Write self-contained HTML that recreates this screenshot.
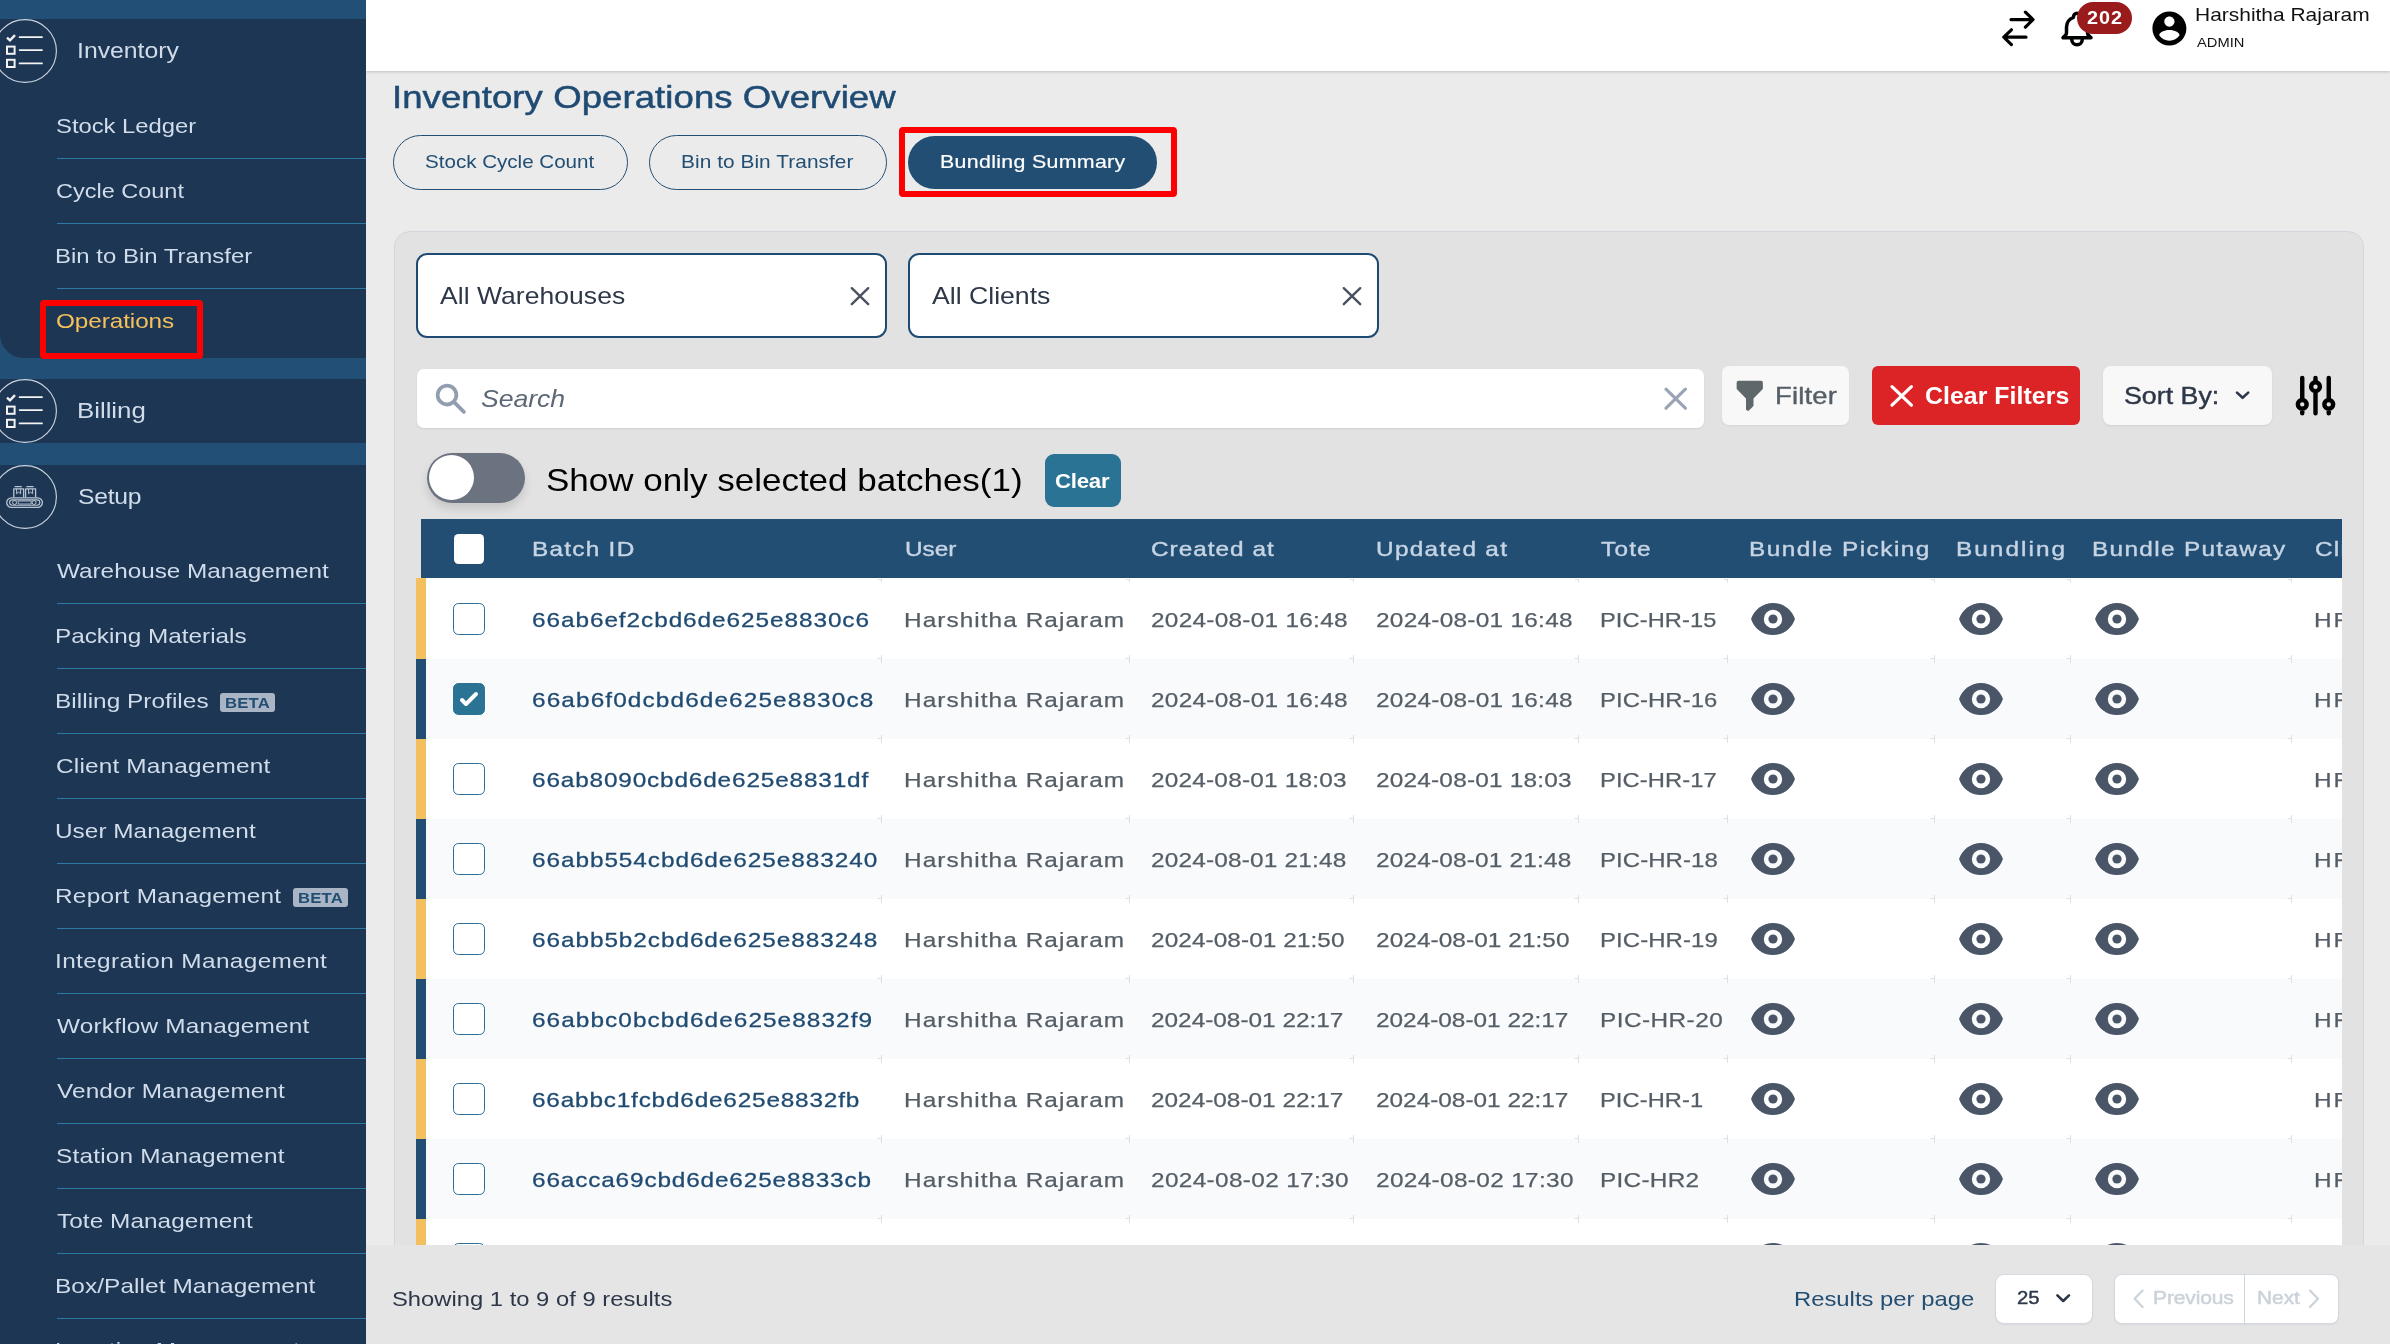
<!DOCTYPE html>
<html lang="en"><head><meta charset="utf-8"><title>Inventory Operations Overview</title>
<style>
html,body{margin:0;padding:0}
body{width:2390px;height:1344px;overflow:hidden;position:relative;background:#ebebeb;font-family:'Liberation Sans',sans-serif}
.abs{position:absolute}
.t{position:absolute;white-space:pre;font-family:'Liberation Sans',sans-serif;transform-origin:0 50%}
#sidebar{position:absolute;left:0;top:0;width:366px;height:1344px;background:#224f75;overflow:hidden}
#sidebar .panel{position:absolute;left:0;width:366px;background:#1d3653}
#sidebar .ln{position:absolute;left:57px;width:309px;height:1px;background:#2b79a1}
#topbar{position:absolute;left:366px;top:0;width:2024px;height:71px;background:#fff;box-shadow:0 1px 3px rgba(0,0,0,.18)}
#main{position:absolute;left:0;top:0;width:2390px;height:1344px}
.cb{position:absolute;width:30px;height:30px;border:1.4px solid #2b6f94;border-radius:5.5px;background:#fff;left:453px}
#root{position:absolute;left:0;top:0;width:2390px;height:1344px;overflow:hidden;will-change:transform}
</style></head><body><div id="root">

<main id="main">
<span class="t" style="left:391.60px;top:82.00px;font-size:31.5px;line-height:31.5px;color:#1f4b73;letter-spacing:0.062px;transform:scaleX(1.1600);-webkit-text-stroke:0.5px #1f4b73;">Inventory Operations Overview</span>
<div class="abs" style="left:393px;top:135px;width:233.4px;height:53px;border:1.3px solid #224e73;border-radius:28px"></div>
<span class="t" style="left:425.20px;top:153.00px;font-size:18.4px;line-height:18.4px;color:#224e73;letter-spacing:-0.022px;transform:scaleX(1.1213);">Stock Cycle Count</span>
<div class="abs" style="left:649px;top:135px;width:236.2px;height:53px;border:1.3px solid #224e73;border-radius:28px"></div>
<span class="t" style="left:681.00px;top:153.00px;font-size:18.4px;line-height:18.4px;color:#224e73;letter-spacing:0.049px;transform:scaleX(1.1333);">Bin to Bin Transfer</span>
<div class="abs" style="left:908px;top:136px;width:249px;height:53px;background:#224e73;border-radius:27px"></div>
<span class="t" style="left:940.00px;top:153.00px;font-size:18.4px;line-height:18.4px;color:#fff;letter-spacing:0.287px;transform:scaleX(1.1600);-webkit-text-stroke:0.2px #fff;">Bundling Summary</span>
<div class="abs" style="left:899px;top:127.4px;width:266.2px;height:57.8px;border:6px solid #fd0000;border-radius:4px"></div>
<div class="abs" style="left:394px;top:231px;width:1967.6px;height:1100px;background:#e2e2e2;border:1px solid #d1d6dd;border-radius:16px"></div>
<div class="abs" style="left:416px;top:253px;width:467px;height:81.4px;background:#fff;border:2px solid #1f4b73;border-radius:11px"></div>
<span class="t" style="left:439.80px;top:285.00px;font-size:23.6px;line-height:23.6px;color:#2d3748;letter-spacing:0.041px;transform:scaleX(1.1232);">All Warehouses</span>
<svg class="abs" style="left:847px;top:283px" width="26" height="26" viewBox="0 0 26 26" stroke="#4a5160" stroke-width="2.4" stroke-linecap="round"><path d="M4.8 5.2L21.2 21.2M21.2 5.2L4.8 21.2"/></svg>
<div class="abs" style="left:908px;top:253px;width:467px;height:81.4px;background:#fff;border:2px solid #1f4b73;border-radius:11px"></div>
<span class="t" style="left:932.00px;top:285.00px;font-size:23.6px;line-height:23.6px;color:#2d3748;letter-spacing:-0.018px;transform:scaleX(1.1308);">All Clients</span>
<svg class="abs" style="left:1339px;top:283px" width="26" height="26" viewBox="0 0 26 26" stroke="#4a5160" stroke-width="2.4" stroke-linecap="round"><path d="M4.8 5.2L21.2 21.2M21.2 5.2L4.8 21.2"/></svg>
<div class="abs" style="left:417px;top:368.6px;width:1287px;height:59.6px;background:#fff;border-radius:7px;box-shadow:0 1px 2px rgba(0,0,0,.08)"></div>
<svg class="abs" style="left:431.85px;top:379.85px" width="37.5" height="37.5" viewBox="0 0 20 20" fill="#929db0"><path fill-rule="evenodd" d="M8 4a4 4 0 100 8 4 4 0 000-8zM2 8a6 6 0 1110.89 3.476l4.817 4.817a1 1 0 01-1.414 1.414l-4.816-4.816A6 6 0 012 8z" clip-rule="evenodd"/></svg>
<span class="t" style="left:480.50px;top:388.00px;font-size:23.6px;line-height:23.6px;color:#5d6776;font-style:italic;letter-spacing:-0.088px;transform:scaleX(1.1301);">Search</span>
<svg class="abs" style="left:1660px;top:383px" width="32" height="32" viewBox="0 0 32 32" stroke="#9aa4b5" stroke-width="3.2" stroke-linecap="round"><path d="M6 6.2L25.4 25.2M25.4 6.2L6 25.2"/></svg>
<div class="abs" style="left:1722px;top:366px;width:127px;height:59px;background:#f8f8f8;border-radius:7px;box-shadow:0 1px 2px rgba(0,0,0,.06)"></div>
<svg class="abs" style="left:1731.4px;top:377.2px" width="37.5" height="37.5" viewBox="0 0 20 20" fill="#5f676b"><path fill-rule="evenodd" d="M3 3a1 1 0 011-1h12a1 1 0 011 1v3a1 1 0 01-.293.707L12 11.414V15a1 1 0 01-.293.707l-2 2A1 1 0 018 17v-5.586L3.293 6.707A1 1 0 013 6V3z" clip-rule="evenodd"/></svg>
<span class="t" style="left:1775.00px;top:385.00px;font-size:23.6px;line-height:23.6px;color:#555e66;letter-spacing:0.172px;transform:scaleX(1.1600);-webkit-text-stroke:0.4px #555e66;">Filter</span>
<div class="abs" style="left:1872px;top:366px;width:208px;height:59px;background:#dc2326;border-radius:6px"></div>
<svg class="abs" style="left:1886px;top:380px" width="32" height="32" viewBox="0 0 32 32" stroke="#fff" stroke-width="3.2" stroke-linecap="round"><path d="M6 6.6L25.4 25.2M25.4 6.6L6 25.2"/></svg>
<span class="t" style="left:1925.40px;top:385.00px;font-size:23.6px;line-height:23.6px;color:#fff;font-weight:700;letter-spacing:0.047px;transform:scaleX(1.0533);">Clear Filters</span>
<div class="abs" style="left:2102.7px;top:365.8px;width:169.5px;height:59.2px;background:#f8f8f8;border-radius:8px;box-shadow:0 1px 2px rgba(0,0,0,.08)"></div>
<span class="t" style="left:2124.40px;top:385.00px;font-size:23.6px;line-height:23.6px;color:#2d3748;transform:scaleX(1.1358);-webkit-text-stroke:0.4px #2d3748;">Sort By:</span>
<svg class="abs" style="left:2232px;top:387px" width="22" height="16" viewBox="0 0 22 16" fill="none" stroke="#2d3748" stroke-width="2.6" stroke-linecap="round" stroke-linejoin="round"><path d="M5 5.6L10.6 10.8L16.2 5.6"/></svg>
<svg class="abs" style="left:2289px;top:369px" width="53" height="53" viewBox="0 0 24 24" fill="none" stroke="#000" stroke-width="2" stroke-linecap="round" stroke-linejoin="round"><path d="M12 6V4m0 2a2 2 0 100 4m0-4a2 2 0 110 4m-6 8a2 2 0 100-4m0 4a2 2 0 110-4m0 4v2m0-6V4m6 6v10m6-2a2 2 0 100-4m0 4a2 2 0 110-4m0 4v2m0-6V4"/></svg>
<div class="abs" style="left:427px;top:453px;width:98px;height:50px;background:#6b7280;border-radius:25px;box-shadow:0 6px 10px rgba(0,0,0,.12)"></div>
<div class="abs" style="left:428.8px;top:455px;width:45.4px;height:45.4px;background:#fff;border-radius:50%"></div>
<span class="t" style="left:546.00px;top:465.00px;font-size:31.9px;line-height:31.9px;color:#000;transform:scaleX(1.0974);">Show only selected batches(1)</span>
<div class="abs" style="left:1045px;top:454px;width:76px;height:53px;background:#2b7394;border-radius:9px"></div>
<span class="t" style="left:1055.00px;top:470.00px;font-size:21px;line-height:21px;color:#fff;font-weight:700;letter-spacing:-0.236px;transform:scaleX(1.0588);">Clear</span>
<div class="abs" style="left:416px;top:519px;width:1926px;height:726px;overflow:hidden">
<div class="abs" style="left:5px;top:0;width:1921px;height:59.4px;background:#224e73"></div>
<div class="abs" style="left:38px;top:14.6px;width:30.4px;height:30.4px;background:#fff;border-radius:4.5px"></div>
<div class="abs" style="left:0;top:59px;width:1926px;height:81px;background:#fff;border-left:10px solid #f4c05f;box-sizing:border-box"></div>
<div class="abs" style="left:0;top:140px;width:1926px;height:80px;background:#f9fafb;border-left:10px solid #224e73;box-sizing:border-box"></div>
<div class="abs" style="left:0;top:220px;width:1926px;height:80px;background:#fff;border-left:10px solid #f4c05f;box-sizing:border-box"></div>
<div class="abs" style="left:0;top:300px;width:1926px;height:80px;background:#f9fafb;border-left:10px solid #224e73;box-sizing:border-box"></div>
<div class="abs" style="left:0;top:380px;width:1926px;height:80px;background:#fff;border-left:10px solid #f4c05f;box-sizing:border-box"></div>
<div class="abs" style="left:0;top:460px;width:1926px;height:80px;background:#f9fafb;border-left:10px solid #224e73;box-sizing:border-box"></div>
<div class="abs" style="left:0;top:540px;width:1926px;height:80px;background:#fff;border-left:10px solid #f4c05f;box-sizing:border-box"></div>
<div class="abs" style="left:0;top:620px;width:1926px;height:80px;background:#f9fafb;border-left:10px solid #224e73;box-sizing:border-box"></div>
<div class="abs" style="left:0;top:700px;width:1926px;height:80px;background:#fff;border-left:10px solid #f4c05f;box-sizing:border-box"></div>
</div>
<span class="t" style="left:531.80px;top:538.00px;font-size:21px;line-height:21px;color:#c6d4e4;letter-spacing:1.084px;transform:scaleX(1.1600);-webkit-text-stroke:0.4px #c6d4e4;">Batch ID</span>
<span class="t" style="left:904.80px;top:538.00px;font-size:21px;line-height:21px;color:#c6d4e4;transform:scaleX(1.1600);-webkit-text-stroke:0.4px #c6d4e4;">User</span>
<span class="t" style="left:1150.60px;top:538.00px;font-size:21px;line-height:21px;color:#c6d4e4;letter-spacing:0.862px;transform:scaleX(1.1600);-webkit-text-stroke:0.4px #c6d4e4;">Created at</span>
<span class="t" style="left:1375.80px;top:538.00px;font-size:21px;line-height:21px;color:#c6d4e4;letter-spacing:1.130px;transform:scaleX(1.1600);-webkit-text-stroke:0.4px #c6d4e4;">Updated at</span>
<span class="t" style="left:1601.00px;top:538.00px;font-size:21px;line-height:21px;color:#c6d4e4;letter-spacing:1.034px;transform:scaleX(1.1600);-webkit-text-stroke:0.4px #c6d4e4;">Tote</span>
<span class="t" style="left:1749.40px;top:538.00px;font-size:21px;line-height:21px;color:#c6d4e4;letter-spacing:1.273px;transform:scaleX(1.1600);-webkit-text-stroke:0.4px #c6d4e4;">Bundle Picking</span>
<span class="t" style="left:1956.40px;top:538.00px;font-size:21px;line-height:21px;color:#c6d4e4;letter-spacing:1.749px;transform:scaleX(1.1600);-webkit-text-stroke:0.4px #c6d4e4;">Bundling</span>
<span class="t" style="left:2092.40px;top:538.00px;font-size:21px;line-height:21px;color:#c6d4e4;letter-spacing:1.141px;transform:scaleX(1.1600);-webkit-text-stroke:0.4px #c6d4e4;">Bundle Putaway</span>
<div class="abs" style="left:416px;top:578px;width:1926px;height:667px;overflow:hidden"><div class="abs" style="left:-416px;top:-578px;width:2390px;height:1344px">
<div class="cb" style="top:603px"></div>
<span class="t" style="left:532.20px;top:609.00px;font-size:21px;line-height:21px;color:#1f4b73;letter-spacing:0.802px;transform:scaleX(1.1600);-webkit-text-stroke:0.3px #1f4b73;">66ab6ef2cbd6de625e8830c6</span>
<span class="t" style="left:904.00px;top:609.00px;font-size:21px;line-height:21px;color:#555e66;letter-spacing:0.916px;transform:scaleX(1.1600);-webkit-text-stroke:0.25px #555e66;">Harshitha Rajaram</span>
<span class="t" style="left:1150.60px;top:609.00px;font-size:21px;line-height:21px;color:#555e66;letter-spacing:0.241px;transform:scaleX(1.1600);-webkit-text-stroke:0.25px #555e66;">2024-08-01 16:48</span>
<span class="t" style="left:1375.60px;top:609.00px;font-size:21px;line-height:21px;color:#555e66;letter-spacing:0.241px;transform:scaleX(1.1600);-webkit-text-stroke:0.25px #555e66;">2024-08-01 16:48</span>
<span class="t" style="left:1599.80px;top:609.00px;font-size:21px;line-height:21px;color:#555e66;letter-spacing:0.089px;transform:scaleX(1.1248);-webkit-text-stroke:0.25px #555e66;">PIC-HR-15</span>
<span class="t" style="left:2313.60px;top:609.00px;font-size:21px;line-height:21px;color:#555e66;letter-spacing:1.552px;transform:scaleX(1.1600);-webkit-text-stroke:0.25px #555e66;">HR</span>
<svg class="abs" style="left:1749.95px;top:596.20px" width="46" height="46" viewBox="0 0 20 20" fill="#4a5568"><path d="M10 12a2 2 0 100-4 2 2 0 000 4z"/><path fill-rule="evenodd" d="M.458 10C1.732 5.943 5.522 3 10 3s8.268 2.943 9.542 7c-1.274 4.057-5.064 7-9.542 7S1.732 14.057.458 10zM14 10a4 4 0 11-8 0 4 4 0 018 0z" clip-rule="evenodd"/></svg>
<svg class="abs" style="left:1957.95px;top:596.20px" width="46" height="46" viewBox="0 0 20 20" fill="#4a5568"><path d="M10 12a2 2 0 100-4 2 2 0 000 4z"/><path fill-rule="evenodd" d="M.458 10C1.732 5.943 5.522 3 10 3s8.268 2.943 9.542 7c-1.274 4.057-5.064 7-9.542 7S1.732 14.057.458 10zM14 10a4 4 0 11-8 0 4 4 0 018 0z" clip-rule="evenodd"/></svg>
<svg class="abs" style="left:2093.95px;top:596.20px" width="46" height="46" viewBox="0 0 20 20" fill="#4a5568"><path d="M10 12a2 2 0 100-4 2 2 0 000 4z"/><path fill-rule="evenodd" d="M.458 10C1.732 5.943 5.522 3 10 3s8.268 2.943 9.542 7c-1.274 4.057-5.064 7-9.542 7S1.732 14.057.458 10zM14 10a4 4 0 11-8 0 4 4 0 018 0z" clip-rule="evenodd"/></svg>
<div class="cb" style="top:683px;background:#2b7394;border-color:#2b7394"></div>
<svg class="abs" style="left:453px;top:683px" width="32" height="32" viewBox="0 0 16 16" fill="#fff"><path d="M12.207 4.793a1 1 0 010 1.414l-5 5a1 1 0 01-1.414 0l-2-2a1 1 0 011.414-1.414L6.500 9.086l4.293-4.293a1 1 0 011.414 0z"/></svg>
<span class="t" style="left:532.20px;top:689.00px;font-size:21px;line-height:21px;color:#1f4b73;letter-spacing:0.960px;transform:scaleX(1.1600);-webkit-text-stroke:0.3px #1f4b73;">66ab6f0dcbd6de625e8830c8</span>
<span class="t" style="left:904.00px;top:689.00px;font-size:21px;line-height:21px;color:#555e66;letter-spacing:0.916px;transform:scaleX(1.1600);-webkit-text-stroke:0.25px #555e66;">Harshitha Rajaram</span>
<span class="t" style="left:1150.60px;top:689.00px;font-size:21px;line-height:21px;color:#555e66;letter-spacing:0.241px;transform:scaleX(1.1600);-webkit-text-stroke:0.25px #555e66;">2024-08-01 16:48</span>
<span class="t" style="left:1375.60px;top:689.00px;font-size:21px;line-height:21px;color:#555e66;letter-spacing:0.241px;transform:scaleX(1.1600);-webkit-text-stroke:0.25px #555e66;">2024-08-01 16:48</span>
<span class="t" style="left:1599.80px;top:689.00px;font-size:21px;line-height:21px;color:#555e66;letter-spacing:0.088px;transform:scaleX(1.1347);-webkit-text-stroke:0.25px #555e66;">PIC-HR-16</span>
<span class="t" style="left:2313.60px;top:689.00px;font-size:21px;line-height:21px;color:#555e66;letter-spacing:1.552px;transform:scaleX(1.1600);-webkit-text-stroke:0.25px #555e66;">HR</span>
<svg class="abs" style="left:1749.95px;top:676.20px" width="46" height="46" viewBox="0 0 20 20" fill="#4a5568"><path d="M10 12a2 2 0 100-4 2 2 0 000 4z"/><path fill-rule="evenodd" d="M.458 10C1.732 5.943 5.522 3 10 3s8.268 2.943 9.542 7c-1.274 4.057-5.064 7-9.542 7S1.732 14.057.458 10zM14 10a4 4 0 11-8 0 4 4 0 018 0z" clip-rule="evenodd"/></svg>
<svg class="abs" style="left:1957.95px;top:676.20px" width="46" height="46" viewBox="0 0 20 20" fill="#4a5568"><path d="M10 12a2 2 0 100-4 2 2 0 000 4z"/><path fill-rule="evenodd" d="M.458 10C1.732 5.943 5.522 3 10 3s8.268 2.943 9.542 7c-1.274 4.057-5.064 7-9.542 7S1.732 14.057.458 10zM14 10a4 4 0 11-8 0 4 4 0 018 0z" clip-rule="evenodd"/></svg>
<svg class="abs" style="left:2093.95px;top:676.20px" width="46" height="46" viewBox="0 0 20 20" fill="#4a5568"><path d="M10 12a2 2 0 100-4 2 2 0 000 4z"/><path fill-rule="evenodd" d="M.458 10C1.732 5.943 5.522 3 10 3s8.268 2.943 9.542 7c-1.274 4.057-5.064 7-9.542 7S1.732 14.057.458 10zM14 10a4 4 0 11-8 0 4 4 0 018 0z" clip-rule="evenodd"/></svg>
<div class="cb" style="top:763px"></div>
<span class="t" style="left:532.20px;top:769.00px;font-size:21px;line-height:21px;color:#1f4b73;letter-spacing:0.720px;transform:scaleX(1.1600);-webkit-text-stroke:0.3px #1f4b73;">66ab8090cbd6de625e8831df</span>
<span class="t" style="left:904.00px;top:769.00px;font-size:21px;line-height:21px;color:#555e66;letter-spacing:0.916px;transform:scaleX(1.1600);-webkit-text-stroke:0.25px #555e66;">Harshitha Rajaram</span>
<span class="t" style="left:1150.60px;top:769.00px;font-size:21px;line-height:21px;color:#555e66;letter-spacing:0.184px;transform:scaleX(1.1600);-webkit-text-stroke:0.25px #555e66;">2024-08-01 18:03</span>
<span class="t" style="left:1375.60px;top:769.00px;font-size:21px;line-height:21px;color:#555e66;letter-spacing:0.184px;transform:scaleX(1.1600);-webkit-text-stroke:0.25px #555e66;">2024-08-01 18:03</span>
<span class="t" style="left:1599.80px;top:769.00px;font-size:21px;line-height:21px;color:#555e66;letter-spacing:0.066px;transform:scaleX(1.1307);-webkit-text-stroke:0.25px #555e66;">PIC-HR-17</span>
<span class="t" style="left:2313.60px;top:769.00px;font-size:21px;line-height:21px;color:#555e66;letter-spacing:1.552px;transform:scaleX(1.1600);-webkit-text-stroke:0.25px #555e66;">HR</span>
<svg class="abs" style="left:1749.95px;top:756.20px" width="46" height="46" viewBox="0 0 20 20" fill="#4a5568"><path d="M10 12a2 2 0 100-4 2 2 0 000 4z"/><path fill-rule="evenodd" d="M.458 10C1.732 5.943 5.522 3 10 3s8.268 2.943 9.542 7c-1.274 4.057-5.064 7-9.542 7S1.732 14.057.458 10zM14 10a4 4 0 11-8 0 4 4 0 018 0z" clip-rule="evenodd"/></svg>
<svg class="abs" style="left:1957.95px;top:756.20px" width="46" height="46" viewBox="0 0 20 20" fill="#4a5568"><path d="M10 12a2 2 0 100-4 2 2 0 000 4z"/><path fill-rule="evenodd" d="M.458 10C1.732 5.943 5.522 3 10 3s8.268 2.943 9.542 7c-1.274 4.057-5.064 7-9.542 7S1.732 14.057.458 10zM14 10a4 4 0 11-8 0 4 4 0 018 0z" clip-rule="evenodd"/></svg>
<svg class="abs" style="left:2093.95px;top:756.20px" width="46" height="46" viewBox="0 0 20 20" fill="#4a5568"><path d="M10 12a2 2 0 100-4 2 2 0 000 4z"/><path fill-rule="evenodd" d="M.458 10C1.732 5.943 5.522 3 10 3s8.268 2.943 9.542 7c-1.274 4.057-5.064 7-9.542 7S1.732 14.057.458 10zM14 10a4 4 0 11-8 0 4 4 0 018 0z" clip-rule="evenodd"/></svg>
<div class="cb" style="top:843px"></div>
<span class="t" style="left:532.20px;top:849.00px;font-size:21px;line-height:21px;color:#1f4b73;letter-spacing:0.802px;transform:scaleX(1.1600);-webkit-text-stroke:0.3px #1f4b73;">66abb554cbd6de625e883240</span>
<span class="t" style="left:904.00px;top:849.00px;font-size:21px;line-height:21px;color:#555e66;letter-spacing:0.916px;transform:scaleX(1.1600);-webkit-text-stroke:0.25px #555e66;">Harshitha Rajaram</span>
<span class="t" style="left:1150.60px;top:849.00px;font-size:21px;line-height:21px;color:#555e66;letter-spacing:0.172px;transform:scaleX(1.1600);-webkit-text-stroke:0.25px #555e66;">2024-08-01 21:48</span>
<span class="t" style="left:1375.60px;top:849.00px;font-size:21px;line-height:21px;color:#555e66;letter-spacing:0.172px;transform:scaleX(1.1600);-webkit-text-stroke:0.25px #555e66;">2024-08-01 21:48</span>
<span class="t" style="left:1599.80px;top:849.00px;font-size:21px;line-height:21px;color:#555e66;letter-spacing:0.066px;transform:scaleX(1.1406);-webkit-text-stroke:0.25px #555e66;">PIC-HR-18</span>
<span class="t" style="left:2313.60px;top:849.00px;font-size:21px;line-height:21px;color:#555e66;letter-spacing:1.552px;transform:scaleX(1.1600);-webkit-text-stroke:0.25px #555e66;">HR</span>
<svg class="abs" style="left:1749.95px;top:836.20px" width="46" height="46" viewBox="0 0 20 20" fill="#4a5568"><path d="M10 12a2 2 0 100-4 2 2 0 000 4z"/><path fill-rule="evenodd" d="M.458 10C1.732 5.943 5.522 3 10 3s8.268 2.943 9.542 7c-1.274 4.057-5.064 7-9.542 7S1.732 14.057.458 10zM14 10a4 4 0 11-8 0 4 4 0 018 0z" clip-rule="evenodd"/></svg>
<svg class="abs" style="left:1957.95px;top:836.20px" width="46" height="46" viewBox="0 0 20 20" fill="#4a5568"><path d="M10 12a2 2 0 100-4 2 2 0 000 4z"/><path fill-rule="evenodd" d="M.458 10C1.732 5.943 5.522 3 10 3s8.268 2.943 9.542 7c-1.274 4.057-5.064 7-9.542 7S1.732 14.057.458 10zM14 10a4 4 0 11-8 0 4 4 0 018 0z" clip-rule="evenodd"/></svg>
<svg class="abs" style="left:2093.95px;top:836.20px" width="46" height="46" viewBox="0 0 20 20" fill="#4a5568"><path d="M10 12a2 2 0 100-4 2 2 0 000 4z"/><path fill-rule="evenodd" d="M.458 10C1.732 5.943 5.522 3 10 3s8.268 2.943 9.542 7c-1.274 4.057-5.064 7-9.542 7S1.732 14.057.458 10zM14 10a4 4 0 11-8 0 4 4 0 018 0z" clip-rule="evenodd"/></svg>
<div class="cb" style="top:923px"></div>
<span class="t" style="left:532.20px;top:929.00px;font-size:21px;line-height:21px;color:#1f4b73;letter-spacing:0.802px;transform:scaleX(1.1600);-webkit-text-stroke:0.3px #1f4b73;">66abb5b2cbd6de625e883248</span>
<span class="t" style="left:904.00px;top:929.00px;font-size:21px;line-height:21px;color:#555e66;letter-spacing:0.916px;transform:scaleX(1.1600);-webkit-text-stroke:0.25px #555e66;">Harshitha Rajaram</span>
<span class="t" style="left:1150.60px;top:929.00px;font-size:21px;line-height:21px;color:#555e66;letter-spacing:0.069px;transform:scaleX(1.1600);-webkit-text-stroke:0.25px #555e66;">2024-08-01 21:50</span>
<span class="t" style="left:1375.60px;top:929.00px;font-size:21px;line-height:21px;color:#555e66;letter-spacing:0.069px;transform:scaleX(1.1600);-webkit-text-stroke:0.25px #555e66;">2024-08-01 21:50</span>
<span class="t" style="left:1599.80px;top:929.00px;font-size:21px;line-height:21px;color:#555e66;letter-spacing:0.066px;transform:scaleX(1.1406);-webkit-text-stroke:0.25px #555e66;">PIC-HR-19</span>
<span class="t" style="left:2313.60px;top:929.00px;font-size:21px;line-height:21px;color:#555e66;letter-spacing:1.552px;transform:scaleX(1.1600);-webkit-text-stroke:0.25px #555e66;">HR</span>
<svg class="abs" style="left:1749.95px;top:916.20px" width="46" height="46" viewBox="0 0 20 20" fill="#4a5568"><path d="M10 12a2 2 0 100-4 2 2 0 000 4z"/><path fill-rule="evenodd" d="M.458 10C1.732 5.943 5.522 3 10 3s8.268 2.943 9.542 7c-1.274 4.057-5.064 7-9.542 7S1.732 14.057.458 10zM14 10a4 4 0 11-8 0 4 4 0 018 0z" clip-rule="evenodd"/></svg>
<svg class="abs" style="left:1957.95px;top:916.20px" width="46" height="46" viewBox="0 0 20 20" fill="#4a5568"><path d="M10 12a2 2 0 100-4 2 2 0 000 4z"/><path fill-rule="evenodd" d="M.458 10C1.732 5.943 5.522 3 10 3s8.268 2.943 9.542 7c-1.274 4.057-5.064 7-9.542 7S1.732 14.057.458 10zM14 10a4 4 0 11-8 0 4 4 0 018 0z" clip-rule="evenodd"/></svg>
<svg class="abs" style="left:2093.95px;top:916.20px" width="46" height="46" viewBox="0 0 20 20" fill="#4a5568"><path d="M10 12a2 2 0 100-4 2 2 0 000 4z"/><path fill-rule="evenodd" d="M.458 10C1.732 5.943 5.522 3 10 3s8.268 2.943 9.542 7c-1.274 4.057-5.064 7-9.542 7S1.732 14.057.458 10zM14 10a4 4 0 11-8 0 4 4 0 018 0z" clip-rule="evenodd"/></svg>
<div class="cb" style="top:1003px"></div>
<span class="t" style="left:532.20px;top:1009.00px;font-size:21px;line-height:21px;color:#1f4b73;letter-spacing:0.915px;transform:scaleX(1.1600);-webkit-text-stroke:0.3px #1f4b73;">66abbc0bcbd6de625e8832f9</span>
<span class="t" style="left:904.00px;top:1009.00px;font-size:21px;line-height:21px;color:#555e66;letter-spacing:0.916px;transform:scaleX(1.1600);-webkit-text-stroke:0.25px #555e66;">Harshitha Rajaram</span>
<span class="t" style="left:1150.60px;top:1009.00px;font-size:21px;line-height:21px;color:#555e66;transform:scaleX(1.1600);-webkit-text-stroke:0.25px #555e66;">2024-08-01 22:17</span>
<span class="t" style="left:1375.60px;top:1009.00px;font-size:21px;line-height:21px;color:#555e66;transform:scaleX(1.1600);-webkit-text-stroke:0.25px #555e66;">2024-08-01 22:17</span>
<span class="t" style="left:1599.80px;top:1009.00px;font-size:21px;line-height:21px;color:#555e66;letter-spacing:0.388px;transform:scaleX(1.1600);-webkit-text-stroke:0.25px #555e66;">PIC-HR-20</span>
<span class="t" style="left:2313.60px;top:1009.00px;font-size:21px;line-height:21px;color:#555e66;letter-spacing:1.552px;transform:scaleX(1.1600);-webkit-text-stroke:0.25px #555e66;">HR</span>
<svg class="abs" style="left:1749.95px;top:996.20px" width="46" height="46" viewBox="0 0 20 20" fill="#4a5568"><path d="M10 12a2 2 0 100-4 2 2 0 000 4z"/><path fill-rule="evenodd" d="M.458 10C1.732 5.943 5.522 3 10 3s8.268 2.943 9.542 7c-1.274 4.057-5.064 7-9.542 7S1.732 14.057.458 10zM14 10a4 4 0 11-8 0 4 4 0 018 0z" clip-rule="evenodd"/></svg>
<svg class="abs" style="left:1957.95px;top:996.20px" width="46" height="46" viewBox="0 0 20 20" fill="#4a5568"><path d="M10 12a2 2 0 100-4 2 2 0 000 4z"/><path fill-rule="evenodd" d="M.458 10C1.732 5.943 5.522 3 10 3s8.268 2.943 9.542 7c-1.274 4.057-5.064 7-9.542 7S1.732 14.057.458 10zM14 10a4 4 0 11-8 0 4 4 0 018 0z" clip-rule="evenodd"/></svg>
<svg class="abs" style="left:2093.95px;top:996.20px" width="46" height="46" viewBox="0 0 20 20" fill="#4a5568"><path d="M10 12a2 2 0 100-4 2 2 0 000 4z"/><path fill-rule="evenodd" d="M.458 10C1.732 5.943 5.522 3 10 3s8.268 2.943 9.542 7c-1.274 4.057-5.064 7-9.542 7S1.732 14.057.458 10zM14 10a4 4 0 11-8 0 4 4 0 018 0z" clip-rule="evenodd"/></svg>
<div class="cb" style="top:1083px"></div>
<span class="t" style="left:532.20px;top:1089.00px;font-size:21px;line-height:21px;color:#1f4b73;letter-spacing:0.690px;transform:scaleX(1.1600);-webkit-text-stroke:0.3px #1f4b73;">66abbc1fcbd6de625e8832fb</span>
<span class="t" style="left:904.00px;top:1089.00px;font-size:21px;line-height:21px;color:#555e66;letter-spacing:0.916px;transform:scaleX(1.1600);-webkit-text-stroke:0.25px #555e66;">Harshitha Rajaram</span>
<span class="t" style="left:1150.60px;top:1089.00px;font-size:21px;line-height:21px;color:#555e66;transform:scaleX(1.1600);-webkit-text-stroke:0.25px #555e66;">2024-08-01 22:17</span>
<span class="t" style="left:1375.60px;top:1089.00px;font-size:21px;line-height:21px;color:#555e66;transform:scaleX(1.1600);-webkit-text-stroke:0.25px #555e66;">2024-08-01 22:17</span>
<span class="t" style="left:1599.80px;top:1089.00px;font-size:21px;line-height:21px;color:#555e66;letter-spacing:0.076px;transform:scaleX(1.1258);-webkit-text-stroke:0.25px #555e66;">PIC-HR-1</span>
<span class="t" style="left:2313.60px;top:1089.00px;font-size:21px;line-height:21px;color:#555e66;letter-spacing:1.552px;transform:scaleX(1.1600);-webkit-text-stroke:0.25px #555e66;">HR</span>
<svg class="abs" style="left:1749.95px;top:1076.20px" width="46" height="46" viewBox="0 0 20 20" fill="#4a5568"><path d="M10 12a2 2 0 100-4 2 2 0 000 4z"/><path fill-rule="evenodd" d="M.458 10C1.732 5.943 5.522 3 10 3s8.268 2.943 9.542 7c-1.274 4.057-5.064 7-9.542 7S1.732 14.057.458 10zM14 10a4 4 0 11-8 0 4 4 0 018 0z" clip-rule="evenodd"/></svg>
<svg class="abs" style="left:1957.95px;top:1076.20px" width="46" height="46" viewBox="0 0 20 20" fill="#4a5568"><path d="M10 12a2 2 0 100-4 2 2 0 000 4z"/><path fill-rule="evenodd" d="M.458 10C1.732 5.943 5.522 3 10 3s8.268 2.943 9.542 7c-1.274 4.057-5.064 7-9.542 7S1.732 14.057.458 10zM14 10a4 4 0 11-8 0 4 4 0 018 0z" clip-rule="evenodd"/></svg>
<svg class="abs" style="left:2093.95px;top:1076.20px" width="46" height="46" viewBox="0 0 20 20" fill="#4a5568"><path d="M10 12a2 2 0 100-4 2 2 0 000 4z"/><path fill-rule="evenodd" d="M.458 10C1.732 5.943 5.522 3 10 3s8.268 2.943 9.542 7c-1.274 4.057-5.064 7-9.542 7S1.732 14.057.458 10zM14 10a4 4 0 11-8 0 4 4 0 018 0z" clip-rule="evenodd"/></svg>
<div class="cb" style="top:1163px"></div>
<span class="t" style="left:532.20px;top:1169.00px;font-size:21px;line-height:21px;color:#1f4b73;letter-spacing:0.727px;transform:scaleX(1.1600);-webkit-text-stroke:0.3px #1f4b73;">66acca69cbd6de625e8833cb</span>
<span class="t" style="left:904.00px;top:1169.00px;font-size:21px;line-height:21px;color:#555e66;letter-spacing:0.916px;transform:scaleX(1.1600);-webkit-text-stroke:0.25px #555e66;">Harshitha Rajaram</span>
<span class="t" style="left:1150.60px;top:1169.00px;font-size:21px;line-height:21px;color:#555e66;letter-spacing:0.299px;transform:scaleX(1.1600);-webkit-text-stroke:0.25px #555e66;">2024-08-02 17:30</span>
<span class="t" style="left:1375.60px;top:1169.00px;font-size:21px;line-height:21px;color:#555e66;letter-spacing:0.299px;transform:scaleX(1.1600);-webkit-text-stroke:0.25px #555e66;">2024-08-02 17:30</span>
<span class="t" style="left:1599.80px;top:1169.00px;font-size:21px;line-height:21px;color:#555e66;letter-spacing:0.230px;transform:scaleX(1.1600);-webkit-text-stroke:0.25px #555e66;">PIC-HR2</span>
<span class="t" style="left:2313.60px;top:1169.00px;font-size:21px;line-height:21px;color:#555e66;letter-spacing:1.552px;transform:scaleX(1.1600);-webkit-text-stroke:0.25px #555e66;">HR</span>
<svg class="abs" style="left:1749.95px;top:1156.20px" width="46" height="46" viewBox="0 0 20 20" fill="#4a5568"><path d="M10 12a2 2 0 100-4 2 2 0 000 4z"/><path fill-rule="evenodd" d="M.458 10C1.732 5.943 5.522 3 10 3s8.268 2.943 9.542 7c-1.274 4.057-5.064 7-9.542 7S1.732 14.057.458 10zM14 10a4 4 0 11-8 0 4 4 0 018 0z" clip-rule="evenodd"/></svg>
<svg class="abs" style="left:1957.95px;top:1156.20px" width="46" height="46" viewBox="0 0 20 20" fill="#4a5568"><path d="M10 12a2 2 0 100-4 2 2 0 000 4z"/><path fill-rule="evenodd" d="M.458 10C1.732 5.943 5.522 3 10 3s8.268 2.943 9.542 7c-1.274 4.057-5.064 7-9.542 7S1.732 14.057.458 10zM14 10a4 4 0 11-8 0 4 4 0 018 0z" clip-rule="evenodd"/></svg>
<svg class="abs" style="left:2093.95px;top:1156.20px" width="46" height="46" viewBox="0 0 20 20" fill="#4a5568"><path d="M10 12a2 2 0 100-4 2 2 0 000 4z"/><path fill-rule="evenodd" d="M.458 10C1.732 5.943 5.522 3 10 3s8.268 2.943 9.542 7c-1.274 4.057-5.064 7-9.542 7S1.732 14.057.458 10zM14 10a4 4 0 11-8 0 4 4 0 018 0z" clip-rule="evenodd"/></svg>
<div class="cb" style="top:1243px"></div>
<svg class="abs" style="left:1749.95px;top:1236.20px" width="46" height="46" viewBox="0 0 20 20" fill="#4a5568"><path d="M10 12a2 2 0 100-4 2 2 0 000 4z"/><path fill-rule="evenodd" d="M.458 10C1.732 5.943 5.522 3 10 3s8.268 2.943 9.542 7c-1.274 4.057-5.064 7-9.542 7S1.732 14.057.458 10zM14 10a4 4 0 11-8 0 4 4 0 018 0z" clip-rule="evenodd"/></svg>
<svg class="abs" style="left:1957.95px;top:1236.20px" width="46" height="46" viewBox="0 0 20 20" fill="#4a5568"><path d="M10 12a2 2 0 100-4 2 2 0 000 4z"/><path fill-rule="evenodd" d="M.458 10C1.732 5.943 5.522 3 10 3s8.268 2.943 9.542 7c-1.274 4.057-5.064 7-9.542 7S1.732 14.057.458 10zM14 10a4 4 0 11-8 0 4 4 0 018 0z" clip-rule="evenodd"/></svg>
<svg class="abs" style="left:2093.95px;top:1236.20px" width="46" height="46" viewBox="0 0 20 20" fill="#4a5568"><path d="M10 12a2 2 0 100-4 2 2 0 000 4z"/><path fill-rule="evenodd" d="M.458 10C1.732 5.943 5.522 3 10 3s8.268 2.943 9.542 7c-1.274 4.057-5.064 7-9.542 7S1.732 14.057.458 10zM14 10a4 4 0 11-8 0 4 4 0 018 0z" clip-rule="evenodd"/></svg>
</div></div>
<svg class="abs" style="left:0;top:0" width="2390" height="1245" viewBox="0 0 2390 1245" fill="none" stroke="#dfe0e3" stroke-width="1"><path d="M881.5 579v3.5M878.0 579.5h3.5M881.5 655v8M877.5 658.5h4M881.5 735v8M877.5 738.5h4M881.5 815v8M877.5 818.5h4M881.5 895v8M877.5 898.5h4M881.5 975v8M877.5 978.5h4M881.5 1055v8M877.5 1058.5h4M881.5 1135v8M877.5 1138.5h4M881.5 1215v8M877.5 1218.5h4M1129.5 579v3.5M1126.0 579.5h3.5M1129.5 655v8M1125.5 658.5h4M1129.5 735v8M1125.5 738.5h4M1129.5 815v8M1125.5 818.5h4M1129.5 895v8M1125.5 898.5h4M1129.5 975v8M1125.5 978.5h4M1129.5 1055v8M1125.5 1058.5h4M1129.5 1135v8M1125.5 1138.5h4M1129.5 1215v8M1125.5 1218.5h4M1353.5 579v3.5M1350.0 579.5h3.5M1353.5 655v8M1349.5 658.5h4M1353.5 735v8M1349.5 738.5h4M1353.5 815v8M1349.5 818.5h4M1353.5 895v8M1349.5 898.5h4M1353.5 975v8M1349.5 978.5h4M1353.5 1055v8M1349.5 1058.5h4M1353.5 1135v8M1349.5 1138.5h4M1353.5 1215v8M1349.5 1218.5h4M1578.5 579v3.5M1575.0 579.5h3.5M1578.5 655v8M1574.5 658.5h4M1578.5 735v8M1574.5 738.5h4M1578.5 815v8M1574.5 818.5h4M1578.5 895v8M1574.5 898.5h4M1578.5 975v8M1574.5 978.5h4M1578.5 1055v8M1574.5 1058.5h4M1578.5 1135v8M1574.5 1138.5h4M1578.5 1215v8M1574.5 1218.5h4M1727.5 579v3.5M1724.0 579.5h3.5M1727.5 655v8M1723.5 658.5h4M1727.5 735v8M1723.5 738.5h4M1727.5 815v8M1723.5 818.5h4M1727.5 895v8M1723.5 898.5h4M1727.5 975v8M1723.5 978.5h4M1727.5 1055v8M1723.5 1058.5h4M1727.5 1135v8M1723.5 1138.5h4M1727.5 1215v8M1723.5 1218.5h4M1934.5 579v3.5M1931.0 579.5h3.5M1934.5 655v8M1930.5 658.5h4M1934.5 735v8M1930.5 738.5h4M1934.5 815v8M1930.5 818.5h4M1934.5 895v8M1930.5 898.5h4M1934.5 975v8M1930.5 978.5h4M1934.5 1055v8M1930.5 1058.5h4M1934.5 1135v8M1930.5 1138.5h4M1934.5 1215v8M1930.5 1218.5h4M2070.5 579v3.5M2067.0 579.5h3.5M2070.5 655v8M2066.5 658.5h4M2070.5 735v8M2066.5 738.5h4M2070.5 815v8M2066.5 818.5h4M2070.5 895v8M2066.5 898.5h4M2070.5 975v8M2066.5 978.5h4M2070.5 1055v8M2066.5 1058.5h4M2070.5 1135v8M2066.5 1138.5h4M2070.5 1215v8M2066.5 1218.5h4M2291.5 579v3.5M2288.0 579.5h3.5M2291.5 655v8M2287.5 658.5h4M2291.5 735v8M2287.5 738.5h4M2291.5 815v8M2287.5 818.5h4M2291.5 895v8M2287.5 898.5h4M2291.5 975v8M2287.5 978.5h4M2291.5 1055v8M2287.5 1058.5h4M2291.5 1135v8M2287.5 1138.5h4M2291.5 1215v8M2287.5 1218.5h4"/></svg>
<div class="abs" style="left:2300px;top:519px;width:42px;height:59px;overflow:hidden"><div class="abs" style="left:-2300px;top:-519px">
<span class="t" style="left:2314.60px;top:538.00px;font-size:21px;line-height:21px;color:#c6d4e4;letter-spacing:1.034px;transform:scaleX(1.1600);-webkit-text-stroke:0.4px #c6d4e4;">Client</span>
</div></div>
<div class="abs" style="left:366px;top:1245px;width:2024px;height:99px;background:#e5e5e5"></div>
<span class="t" style="left:392.40px;top:1288.00px;font-size:21px;line-height:21px;color:#2d3748;letter-spacing:0.007px;transform:scaleX(1.1317);">Showing 1 to 9 of 9 results</span>
<span class="t" style="left:1794.00px;top:1288.00px;font-size:21px;line-height:21px;color:#224e73;transform:scaleX(1.1346);">Results per page</span>
<div class="abs" style="left:1994.6px;top:1274.4px;width:96px;height:47.2px;background:#fff;border:1px solid #d3d9e1;border-radius:9px;box-shadow:0 1px 2px rgba(0,0,0,.06)"></div>
<span class="t" style="left:2016.60px;top:1289.00px;font-size:18.4px;line-height:18.4px;color:#2d3748;transform:scaleX(1.1053);-webkit-text-stroke:0.4px #2d3748;">25</span>
<svg class="abs" style="left:2052px;top:1290px" width="22" height="16" viewBox="0 0 22 16" fill="none" stroke="#2d3748" stroke-width="2.6" stroke-linecap="round" stroke-linejoin="round"><path d="M5.4 5.4L11.2 11L17 5.4"/></svg>
<div class="abs" style="left:2113.6px;top:1274.4px;width:223px;height:47.2px;background:#fff;border:1px solid #d3d9e1;border-radius:8px;box-shadow:0 1px 2px rgba(0,0,0,.06)"></div>
<div class="abs" style="left:2244px;top:1275px;width:1px;height:48px;background:#cfd5de"></div>
<svg class="abs" style="left:2130px;top:1286px" width="18" height="26" viewBox="0 0 18 26" fill="none" stroke="#ccd2da" stroke-width="2.2" stroke-linecap="round" stroke-linejoin="round"><path d="M12.6 4.6L4.6 12.8L12.6 21"/></svg>
<span class="t" style="left:2152.80px;top:1289.00px;font-size:18.4px;line-height:18.4px;color:#ccd2da;letter-spacing:-0.125px;transform:scaleX(1.1429);-webkit-text-stroke:0.5px #ccd2da;">Previous</span>
<span class="t" style="left:2256.80px;top:1289.00px;font-size:18.4px;line-height:18.4px;color:#ccd2da;transform:scaleX(1.1351);-webkit-text-stroke:0.5px #ccd2da;">Next</span>
<svg class="abs" style="left:2305px;top:1286px" width="18" height="26" viewBox="0 0 18 26" fill="none" stroke="#ccd2da" stroke-width="2.2" stroke-linecap="round" stroke-linejoin="round"><path d="M5 4.6L13 12.8L5 21"/></svg>
</main>
<header class="abs" style="left:0;top:0;width:2390px;height:80px"><div id="topbar"></div>
<svg class="abs" style="left:1998px;top:7px" width="42" height="44" viewBox="1998 7 42 44" fill="none" stroke="#000" stroke-width="3.2" stroke-linecap="round" stroke-linejoin="round"><path d="M2011 19.6H2033M2025.4 12.2L2033 19.6L2025.4 27.2M2026 37.2H2004M2011.4 29.8L2003.8 37.2L2011.4 44.6"/></svg>
<svg class="abs" style="left:2056px;top:7.5px" width="42" height="42" viewBox="0 0 24 24" fill="none" stroke="#000" stroke-width="2" stroke-linecap="round" stroke-linejoin="round"><path d="M15 17h5l-1.405-1.405A2.032 2.032 0 0118 14.158V11a6.002 6.002 0 00-4-5.659V5a2 2 0 10-4 0v.341C7.67 6.165 6 8.388 6 11v3.159c0 .538-.214 1.055-.595 1.436L4 17h5m6 0v1a3 3 0 11-6 0v-1m6 0H9"/></svg>
<div class="abs" style="left:2077px;top:2px;width:55px;height:32px;background:#991b1b;border-radius:16px"></div>
<span class="t" style="left:2087.00px;top:9.00px;font-size:18px;line-height:18px;color:#fff;font-weight:700;letter-spacing:0.909px;transform:scaleX(1.1000);">202</span>
<svg class="abs" style="left:2149.2px;top:8px" width="40.8" height="40.8" viewBox="0 0 24 24" fill="#000"><path d="M12 2C6.48 2 2 6.48 2 12s4.480 10 10 10 10-4.480 10-10S17.520 2 12 2zm0 3c1.660 0 3 1.340 3 3s-1.340 3-3 3-3-1.340-3-3 1.340-3 3-3zm0 14.200c-2.500 0-4.710-1.280-6-3.220.030-1.990 4-3.080 6-3.080 1.990 0 5.970 1.090 6 3.080-1.290 1.940-3.500 3.220-6 3.220z"/></svg>
<span class="t" style="left:2195.40px;top:6.00px;font-size:18.4px;line-height:18.4px;color:#111;transform:scaleX(1.1391);">Harshitha Rajaram</span>
<span class="t" style="left:2197.40px;top:36.00px;font-size:13.1px;line-height:13.1px;color:#111;transform:scaleX(1.1220);">ADMIN</span>
</header>
<nav id="sidebar">
<div class="panel" style="top:19px;height:339px;border-bottom-left-radius:24px"></div>
<div class="panel" style="top:379px;height:64px"></div>
<div class="panel" style="top:465px;height:900px"></div>
<svg class="abs" style="left:0;top:17px" width="60" height="68" viewBox="0 17 60 68" fill="none" stroke="#f3f3f3" stroke-linecap="round" stroke-linejoin="round">
<circle cx="25" cy="51" r="31.4" stroke="#c9d3de" stroke-width="1.15"/>
<polyline points="7,37.6 10,40.4 15,35.2" stroke-width="2.4" stroke-linecap="butt" stroke-linejoin="miter"/>
<line x1="19.6" y1="37.2" x2="42" y2="37.2" stroke-width="1.8"/>
<rect x="7" y="46.6" width="7.6" height="7.2" stroke-width="2" stroke-linejoin="miter"/>
<line x1="19.6" y1="50.1" x2="42" y2="50.1" stroke-width="1.8"/>
<rect x="7" y="59.8" width="7.6" height="7.2" stroke-width="2" stroke-linejoin="miter"/>
<line x1="19.6" y1="63.4" x2="42" y2="63.4" stroke-width="1.8"/>
</svg>
<svg class="abs" style="left:0;top:377px" width="60" height="68" viewBox="0 377 60 68" fill="none" stroke="#f3f3f3" stroke-linecap="round" stroke-linejoin="round">
<circle cx="25" cy="411" r="31.4" stroke="#c9d3de" stroke-width="1.15"/>
<polyline points="7,397.6 10,400.4 15,395.2" stroke-width="2.4" stroke-linecap="butt" stroke-linejoin="miter"/>
<line x1="19.6" y1="397.2" x2="42" y2="397.2" stroke-width="1.8"/>
<rect x="7" y="406.6" width="7.6" height="7.2" stroke-width="2" stroke-linejoin="miter"/>
<line x1="19.6" y1="410.1" x2="42" y2="410.1" stroke-width="1.8"/>
<rect x="7" y="419.8" width="7.6" height="7.2" stroke-width="2" stroke-linejoin="miter"/>
<line x1="19.6" y1="423.4" x2="42" y2="423.4" stroke-width="1.8"/>
</svg>
<svg class="abs" style="left:0;top:463px" width="60" height="68" viewBox="0 463 60 68" fill="none" stroke="#b9c5d3" stroke-linecap="butt" stroke-linejoin="round">
<circle cx="25" cy="497" r="31.4" stroke="#c9d3de" stroke-width="1.15"/>
<rect x="6.7" y="497.80" width="35.7" height="9.6" rx="4.8" stroke-width="1.3"/>
<rect x="9.6" y="499.90" width="30.2" height="5.3" rx="2.65" stroke-width="1.1"/>
<circle cx="14.6" cy="502.50" r="2" stroke-width="1"/>
<circle cx="34.1" cy="502.50" r="2" stroke-width="1"/>
<rect x="18.2" y="501.00" width="13" height="3" stroke-width="0.9" />
<path d="M13.8 497.20V488.80H23.6V497.20M25.6 497.20V488.80H35.6V497.20" stroke-width="1.3"/>
<path d="M14.6 486.70H21.8M26.4 486.70H33.6" stroke-width="1.2"/>
<path d="M16.6 488.80V493.80L18.6 492.00L20.6 493.80V488.80M28.6 488.80V493.80L30.6 492.00L32.6 493.80V488.80" stroke-width="1"/>
</svg>
<span class="t" style="left:77.00px;top:40.00px;font-size:22.3px;line-height:22.3px;color:#d0dcea;transform:scaleX(1.1111);">Inventory</span>
<span class="t" style="left:77.40px;top:400.00px;font-size:22.3px;line-height:22.3px;color:#d0dcea;letter-spacing:-0.029px;transform:scaleX(1.1600);">Billing</span>
<span class="t" style="left:78.00px;top:486.00px;font-size:22.3px;line-height:22.3px;color:#d0dcea;letter-spacing:-0.226px;transform:scaleX(1.1071);">Setup</span>
<span class="t" style="left:56.40px;top:115.00px;font-size:21px;line-height:21px;color:#d0dcea;letter-spacing:-0.016px;transform:scaleX(1.1350);">Stock Ledger</span>
<div class="ln" style="top:158px"></div>
<span class="t" style="left:56.40px;top:180.00px;font-size:21px;line-height:21px;color:#d0dcea;letter-spacing:-0.018px;transform:scaleX(1.1204);">Cycle Count</span>
<div class="ln" style="top:223px"></div>
<span class="t" style="left:55.40px;top:245.00px;font-size:21px;line-height:21px;color:#d0dcea;letter-spacing:0.020px;transform:scaleX(1.1392);">Bin to Bin Transfer</span>
<div class="ln" style="top:288px"></div>
<span class="t" style="left:56.40px;top:310.00px;font-size:21px;line-height:21px;color:#f6c05c;letter-spacing:-0.058px;transform:scaleX(1.1564);">Operations</span>
<div class="abs" style="left:39.5px;top:299.5px;width:151.5px;height:47.5px;border:6px solid #fd0000;border-radius:4px"></div>
<span class="t" style="left:57.40px;top:560.00px;font-size:21px;line-height:21px;color:#d0dcea;letter-spacing:-0.018px;transform:scaleX(1.1583);">Warehouse Management</span>
<div class="ln" style="top:603px"></div>
<span class="t" style="left:55.40px;top:625.00px;font-size:21px;line-height:21px;color:#d0dcea;letter-spacing:-0.011px;transform:scaleX(1.1571);">Packing Materials</span>
<div class="ln" style="top:668px"></div>
<span class="t" style="left:55.40px;top:690.00px;font-size:21px;line-height:21px;color:#d0dcea;letter-spacing:0.034px;transform:scaleX(1.1600);">Billing Profiles</span>
<div class="ln" style="top:733px"></div>
<span class="t" style="left:56.40px;top:755.00px;font-size:21px;line-height:21px;color:#d0dcea;letter-spacing:0.162px;transform:scaleX(1.1600);">Client Management</span>
<div class="ln" style="top:798px"></div>
<span class="t" style="left:55.40px;top:820.00px;font-size:21px;line-height:21px;color:#d0dcea;letter-spacing:0.037px;transform:scaleX(1.1581);">User Management</span>
<div class="ln" style="top:863px"></div>
<span class="t" style="left:55.40px;top:885.00px;font-size:21px;line-height:21px;color:#d0dcea;letter-spacing:0.216px;transform:scaleX(1.1600);">Report Management</span>
<div class="ln" style="top:928px"></div>
<span class="t" style="left:55.40px;top:950.00px;font-size:21px;line-height:21px;color:#d0dcea;letter-spacing:0.320px;transform:scaleX(1.1600);">Integration Management</span>
<div class="ln" style="top:993px"></div>
<span class="t" style="left:57.40px;top:1015.00px;font-size:21px;line-height:21px;color:#d0dcea;letter-spacing:0.172px;transform:scaleX(1.1600);">Workflow Management</span>
<div class="ln" style="top:1058px"></div>
<span class="t" style="left:57.40px;top:1080.00px;font-size:21px;line-height:21px;color:#d0dcea;letter-spacing:0.092px;transform:scaleX(1.1600);">Vendor Management</span>
<div class="ln" style="top:1123px"></div>
<span class="t" style="left:56.40px;top:1145.00px;font-size:21px;line-height:21px;color:#d0dcea;letter-spacing:0.183px;transform:scaleX(1.1600);">Station Management</span>
<div class="ln" style="top:1188px"></div>
<span class="t" style="left:57.40px;top:1210.00px;font-size:21px;line-height:21px;color:#d0dcea;letter-spacing:0.043px;transform:scaleX(1.1600);">Tote Management</span>
<div class="ln" style="top:1253px"></div>
<span class="t" style="left:55.40px;top:1275.00px;font-size:21px;line-height:21px;color:#d0dcea;letter-spacing:0.073px;transform:scaleX(1.1600);">Box/Pallet Management</span>
<div class="ln" style="top:1318px"></div>
<span class="t" style="left:55.40px;top:1339.00px;font-size:21px;line-height:21px;color:#d0dcea;letter-spacing:0.182px;transform:scaleX(1.1600);">Location Management</span>
<div class="ln" style="top:1383px"></div>
<div class="abs" style="left:220px;top:693px;width:55px;height:19px;background:#a9b5c4;border-radius:3px"></div><span class="t" style="left:224.80px;top:696.00px;font-size:14.4px;line-height:14.4px;color:#224e73;font-weight:700;letter-spacing:0.172px;transform:scaleX(1.1600);">BETA</span>
<div class="abs" style="left:293px;top:888px;width:55px;height:19px;background:#a9b5c4;border-radius:3px"></div><span class="t" style="left:297.80px;top:891.00px;font-size:14.4px;line-height:14.4px;color:#224e73;font-weight:700;letter-spacing:0.172px;transform:scaleX(1.1600);">BETA</span>
</nav>
</div></body></html>
